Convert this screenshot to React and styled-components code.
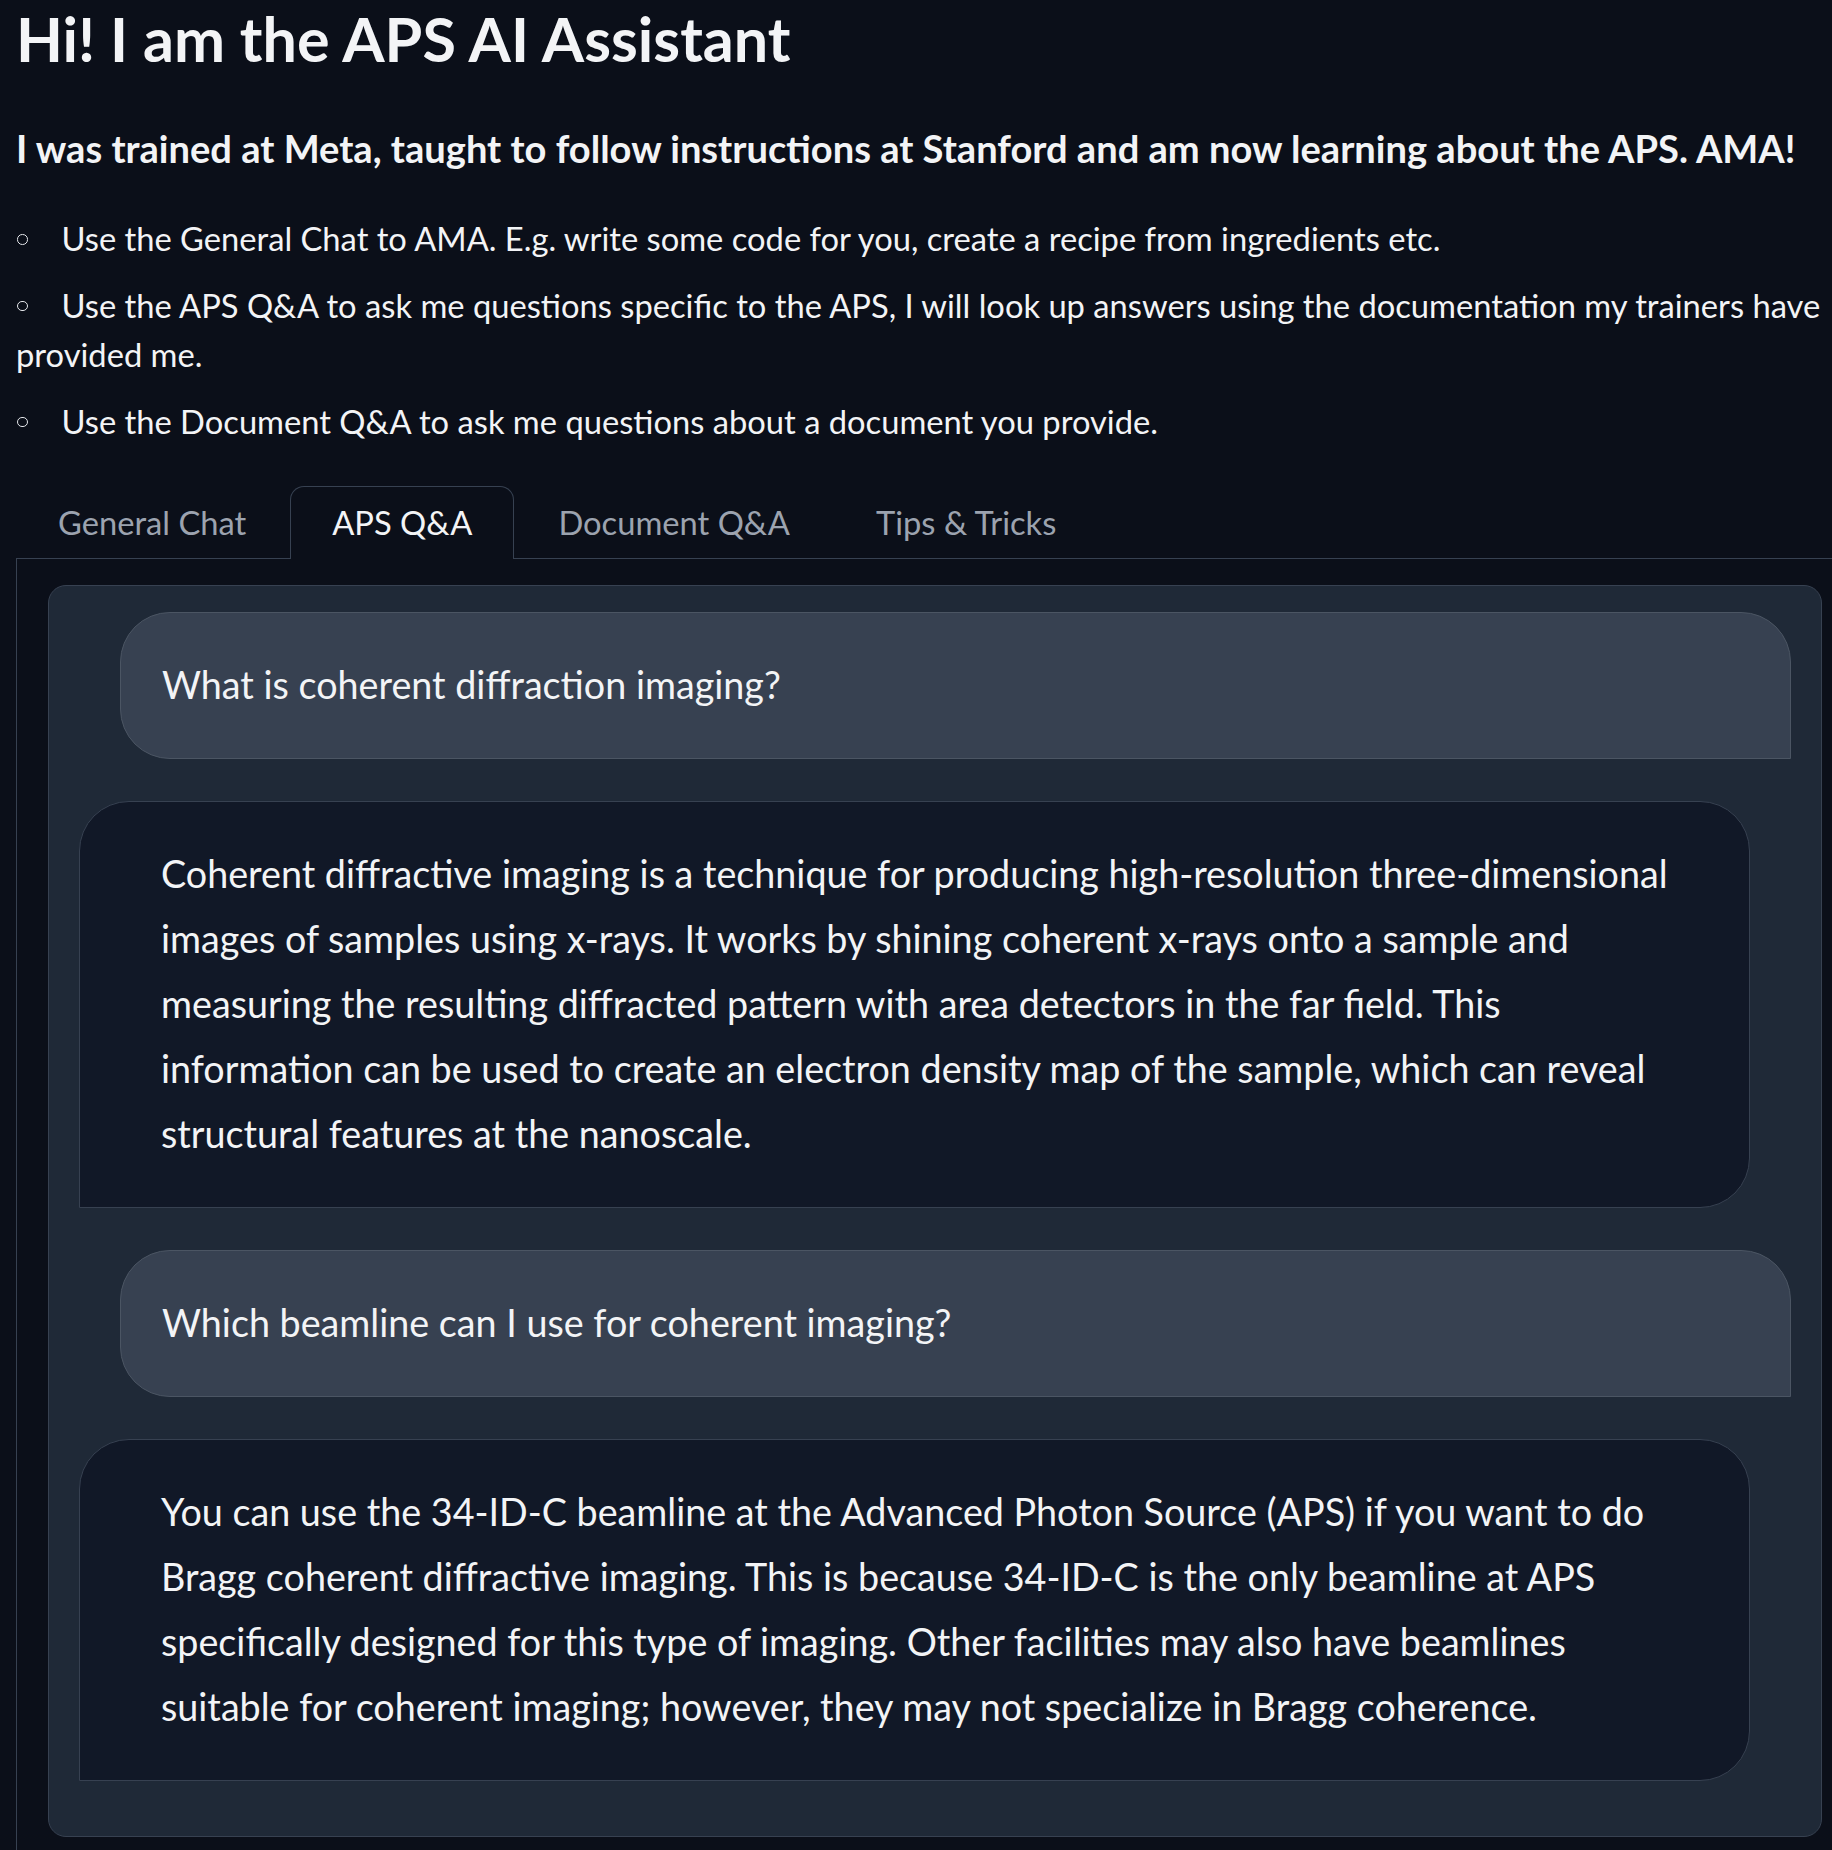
import React from "react";
import styled, { createGlobalStyle } from "styled-components";

const GlobalStyle = createGlobalStyle`
  html, body {
    margin: 0;
    padding: 0;
    background: #0b0f19;
    overflow: hidden;
  }
  body {
    font-family: Lato, "Open Sans", sans-serif;
    color: #f3f4f6;
  }
`;

const Page = styled.div`
  width: 1838px;
  padding-left: 16px;
  box-sizing: content-box;
`;

const Title = styled.h1`
  margin: 0;
  padding-top: 1px;
  font-size: 61px;
  line-height: 76px;
  font-weight: 700;
  color: #f3f4f6;
`;

const Subtitle = styled.h3`
  margin: 48px 0 0;
  font-size: 38.1px;
  line-height: 46px;
  font-weight: 700;
  color: #f3f4f6;
  white-space: nowrap;
`;

const List = styled.ul`
  list-style: none;
  margin: 43px 0 0;
  padding: 0;
  display: flex;
  flex-direction: column;
  gap: 17px;
`;

const Item = styled.li`
  font-size: 32.7px;
  line-height: 49.5px;
  color: #f3f4f6;
  white-space: nowrap;
  &::before {
    content: "";
    display: inline-block;
    width: 8.5px;
    height: 8.5px;
    border: 1.5px solid #e5e7eb;
    border-radius: 50%;
    margin-left: 1px;
    margin-right: 34px;
    vertical-align: middle;
    margin-bottom: 6px;
  }
`;

const Tabs = styled.div`
  margin-top: 40px;
`;

const TabList = styled.div`
  display: flex;
  align-items: flex-start;
  border-bottom: 1px solid #374151;
  height: 72px;
`;

const Tab = styled.button`
  all: unset;
  box-sizing: border-box;
  height: ${(p) => (p.$active ? "73px" : "72px")};
  padding: 0 41px 1px;
  display: flex;
  align-items: center;
  font-family: Lato, "Open Sans", sans-serif;
  font-size: 32.7px;
  color: ${(p) => (p.$active ? "#f3f4f6" : "#9ca3af")};
  background: ${(p) => (p.$active ? "#0b0f19" : "transparent")};
  border: 1px solid ${(p) => (p.$active ? "#374151" : "transparent")};
  border-bottom: none;
  border-radius: 14px 14px 0 0;
  margin-right: 2px;
  position: relative;
  z-index: 1;
`;

const Panel = styled.div`
  border-left: 1px solid #374151;
  border-right: 1px solid #374151;
  padding: 26px 31px 40px;
`;

const ChatBox = styled.div`
  background: #1f2937;
  border: 1px solid #374151;
  border-radius: 18px;
  padding: 26px 30px 55px;
  display: flex;
  flex-direction: column;
  gap: 42px;
`;

const Bubble = styled.div`
  box-sizing: border-box;
  width: calc(100% - 41px);
  align-self: ${(p) => (p.$user ? "flex-end" : "flex-start")};
  background: ${(p) => (p.$user ? "#374151" : "#111827")};
  border: 1px solid ${(p) => (p.$user ? "#4b5563" : "#374151")};
  border-radius: ${(p) => (p.$user ? "50px 50px 0 50px" : "50px 50px 50px 0")};
  padding: ${(p) => (p.$user ? "38.5px 41px 41.5px 41px" : "38.5px 41px 41.5px 81px")};
  font-size: 37.7px;
  line-height: 65px;
  color: #f3f4f6;
`;

const Line = styled.span`
  display: block;
  white-space: nowrap;
`;

const tabs = ["General Chat", "APS Q&A", "Document Q&A", "Tips & Tricks"];

const messages = [
  { user: true, lines: ["What is coherent diffraction imaging?"] },
  {
    user: false,
    lines: [
      "Coherent diffractive imaging is a technique for producing high-resolution three-dimensional",
      "images of samples using x-rays. It works by shining coherent x-rays onto a sample and",
      "measuring the resulting diffracted pattern with area detectors in the far field. This",
      "information can be used to create an electron density map of the sample, which can reveal",
      "structural features at the nanoscale.",
    ],
  },
  { user: true, lines: ["Which beamline can I use for coherent imaging?"] },
  {
    user: false,
    lines: [
      "You can use the 34-ID-C beamline at the Advanced Photon Source (APS) if you want to do",
      "Bragg coherent diffractive imaging. This is because 34-ID-C is the only beamline at APS",
      "specifically designed for this type of imaging. Other facilities may also have beamlines",
      "suitable for coherent imaging; however, they may not specialize in Bragg coherence.",
    ],
  },
];

export default function App() {
  return (
    <>
      <GlobalStyle />
      <Page>
        <Title>Hi! I am the APS AI Assistant</Title>
        <Subtitle>
          I was trained at Meta, taught to follow instructions at Stanford and am now learning about the APS. AMA!
        </Subtitle>
        <List>
          <Item>Use the General Chat to AMA. E.g. write some code for you, create a recipe from ingredients etc.</Item>
          <Item>
            Use the APS Q&amp;A to ask me questions specific to the APS, I will look up answers using the documentation my trainers have
            <br />
            provided me.
          </Item>
          <Item>Use the Document Q&amp;A to ask me questions about a document you provide.</Item>
        </List>
        <Tabs>
          <TabList>
            {tabs.map((t) => (
              <Tab key={t} $active={t === "APS Q&A"}>
                {t}
              </Tab>
            ))}
          </TabList>
          <Panel>
            <ChatBox>
              {messages.map((m, i) => (
                <Bubble key={i} $user={m.user}>
                  {m.lines.map((l, j) => (
                    <Line key={j}>{l}</Line>
                  ))}
                </Bubble>
              ))}
            </ChatBox>
          </Panel>
        </Tabs>
      </Page>
    </>
  );
}
